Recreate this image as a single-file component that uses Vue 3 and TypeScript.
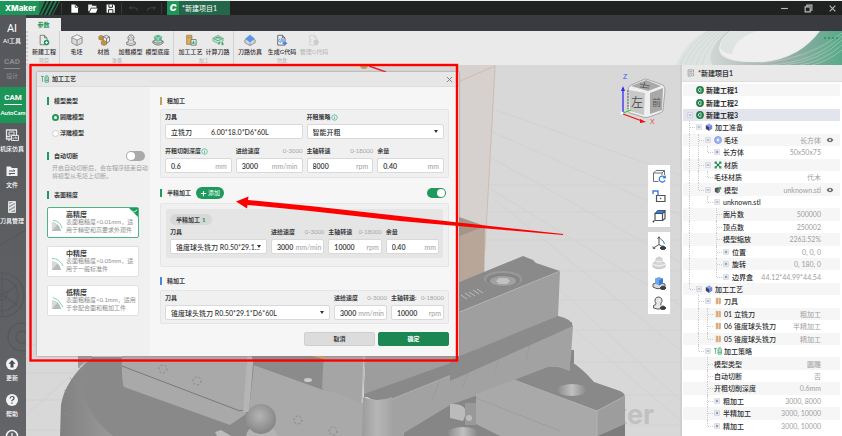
<script setup lang="ts">
import { computed, h, reactive, ref } from 'vue'

interface Layer { d: string; fill?: string; stroke?: string; w?: number }

const G = '#1d9a5c'
const K = '#6d7072'
const B = '#3d7fd6'
const circle = (x: number, y: number, r: number) =>
  `M${x - r} ${y}a${r} ${r} 0 1 0 ${2 * r} 0a${r} ${r} 0 1 0 ${-2 * r} 0z`
const EYE = 'M8 12q3-4 6 0q-3 4-6 0z'

const icons: Record<string, Layer[]> = {
  newProject: [
    { d: 'M2.500 1.500h5l3 3v8h-8zM7.500 1.500v3h3', stroke: K },
    { d: circle(10, 10, 3.2), fill: G },
    { d: 'M10 8.300v3.400M8.300 10h3.400', stroke: '#fff' },
  ],
  blank: [
    { d: 'M7 1l6 3v6.500l-6 3l-6-3V4z', fill: '#d9dadb', stroke: '#88898b' },
    { d: 'M1 4l6 3l6-3M7 7v6.500', stroke: '#88898b' },
    { d: 'M7 1l6 3l-6 3l-6-3z', fill: '#f5f5f5', stroke: '#88898b', w: 0.7 },
  ],
  material: [
    { d: 'M6 3l4-1.500l3.500 2v5L9.500 11L6 9z', fill: '#eee', stroke: K },
    { d: 'M6 3l4 2l3.500-1.500M10 5v6', stroke: K },
    { d: 'M1 3l2.500-1.500L6 3v3L3.500 7.200L1 6zM4 8.500l3-1l3 1.500v3L7 13.500l-3-1.500z', fill: '#c99438', stroke: '#79602b', w: 0.6 },
  ],
  load: [
    { d: 'M7 1a3.700 3.700 0 0 0-2.500 6.300Q5 9 2 9.500v2.800q5 2.400 10 0V9.500q-3-.5-2.500-2.200A3.700 3.700 0 0 0 7 1z', fill: '#e2e3e3', stroke: K },
    { d: 'M2 10q5 2.400 10 0M5.500 4q1.500-1.500 3 0v3q-1.500 1-3 0z', stroke: '#8d8f90', w: 0.7 },
  ],
  base: [
    { d: 'M1 8.500q6-4 12 0v2q-6 5-12 0z', fill: '#d2d4d4', stroke: K },
    { d: 'M1 8.500q6 4.500 12 0', stroke: K },
    { d: 'M2 3l5-2l5 2l-1 4l-4 2l-4-2z', fill: '#55b487' },
    { d: 'M2 3l5 2l5-2M7 5v4M4 2.500l5 5M10 2.500l-5 5', stroke: '#cfeadb', w: 0.6 },
  ],
  craft: [
    { d: 'M2 1.500h6v10.500H2z', fill: '#d9ae63', stroke: '#a67f35' },
    { d: 'M2 3.500q3 1.500 6 0', stroke: '#a67f35', w: 0.7 },
    { d: 'M7 6.500h6v6.500H7z', fill: '#e6f2ec', stroke: K },
    { d: 'M8.500 11.500v-2M10 11.500v-3.500M11.500 11.500v-1.500', stroke: G },
  ],
  path: [
    { d: 'M1 5l6-3.500l6 3.500v3l-6 3l-6-3z', fill: '#bfe0cf', stroke: '#63a584', w: 0.8 },
    { d: 'M1 5l6 3l6-3M3 5q4-3 8 0M5 5q2-1.500 4 0', stroke: '#3e9a6d', w: 0.8 },
    { d: 'M7 8.500h6.500v4.500H7z', fill: '#eaeaea' },
    { d: 'M8 12.500V9.500h2M8 11h1.500M13 9.500h-1.500v1.500h1.500v1.500h-2', stroke: G },
  ],
  simulate: [
    { d: 'M1 7l6-3l6 3v3l-6 3.500L1 10z', fill: '#d4d6d8', stroke: '#85888c' },
    { d: 'M1.500 5.500l5.500-4.500l5.500 4.500l-5.500 4.500z', fill: '#5a94e4', stroke: '#8bb4ef', w: 0.6 },
    { d: 'M7 10v3.500', stroke: '#85888c', w: 0.7 },
  ],
  gcode: [
    { d: 'M2 1.500h5.500l3 3v8.500H2zM7.500 1.500v3h3', stroke: '#5c6064' },
    { d: 'M4.500 5.500l-1.500 2l1.500 2M6.500 5l-1 5', stroke: B },
    { d: circle(8.500, 8, 2.2), fill: '#8bb4ef' },
    { d: 'M7 10.500l3-1.500l3.500 1.500l-3 2.500z', fill: '#4783de' },
  ],
  gcodeOff: [
    { d: 'M2 1.500h5.500l3 3v8.500H2zM7.500 1.500v3h3', stroke: '#cfd0d1' },
    { d: 'M4.500 5.500l-1.500 2l1.500 2', stroke: '#cfd0d1' },
    { d: circle(9.500, 9.500, 3), fill: '#cbcccd' },
  ],
  machine: [
    { d: 'M1.500 2h10v9h-10zM1.500 8.500h4M4 11v2', stroke: '#e3e4e4', w: 1.3 },
    { d: 'M4 4h5v3H4z', stroke: '#e3e4e4', w: 1 },
    { d: 'M6.500 7.500h7v5h-7z', fill: '#5b5d61', stroke: '#e3e4e4', w: 1 },
    { d: 'M8 9v2h1M10 11V9h1v2M12 11V9', stroke: '#e3e4e4', w: 0.7 },
  ],
  folder: [
    { d: 'M1.500 2.500h4l1.500 1.500h5.500v8h-11z', fill: '#f0f0f0' },
    { d: 'M4 7h6l-1.500-1.500M10 9.500H4l1.500 1.500', stroke: '#5b5d61' },
  ],
  tool: [
    { d: 'M3.500 1.500h7v11h-7z', fill: '#a5a6a8', stroke: '#dedfdf' },
    { d: 'M4 5l6-3M4 8.500l6-3.500M4 12l6-3.500', stroke: '#f0f0f0', w: 1.2 },
  ],
  update: [
    { d: circle(7, 7, 6), fill: '#f2f2f2' },
    { d: 'M7 3l3.500 3.700h-2V10.500h-3V6.700h-2z', fill: '#4b4d51' },
  ],
  help: [
    { d: circle(7, 7, 6), fill: '#f2f2f2' },
    { d: 'M5 5.500q.2-2 2-2q2 0 2 1.800q0 1.200-2 2.200v.8M7 9.500v1.200', stroke: '#4b4d51', w: 1.2 },
  ],
  clock: [
    { d: circle(7, 7, 5.5), stroke: '#f2f2f2', w: 1.6 },
    { d: 'M7 4v3.500l3 2', stroke: '#f2f2f2', w: 1.3 },
  ],
  page: [{ d: 'M3 2h5l3.500 3.500V12.500H3z', fill: '#fff' }, { d: 'M8 2v3.500h3.500', stroke: '#333' }],
  open: [{ d: 'M1.500 2h4.500l1 1.500h5V6h-7l-2 4.500H1.500z', fill: '#e8e8e8' }, { d: 'M5.500 7h8l-2 5.500H3z', fill: '#fff' }],
  save: [{ d: 'M2 2h9l1.500 1.500v9H2z', fill: '#fff' }, { d: 'M5 2v3.500h4.500V2M4.500 12.500V8.500h5.500v4', stroke: '#222', w: 1.2 }],
  undo: [{ d: 'M4 4L2 6.200l2.500 2M2 6.200h7q3.500.3 3 4', stroke: '#4a4c4b' }],
  redo: [{ d: 'M10 4l2 2.200l-2.500 2M12 6.200H5Q1.500 6.500 2 10.200', stroke: '#4a4c4b' }],
  doc: [
    { d: 'M2 1.500h9.500v5M7 12.500H2v-11M4 4.500h5.500M4 7h4M4 9.500h2', stroke: '#77797b' },
    { d: circle(10, 10, 2.3), stroke: '#77797b' },
  ],
  brand: [
    { d: circle(7, 7, 6.8), fill: '#1e7d46' },
    { d: 'M9.700 5A3.200 3.200 0 1 0 9.700 9M9.500 7H7', stroke: '#fff', w: 1.4 },
  ],
  cube: [
    { d: 'M7 1l5.500 3v6L7 13.500L1.500 10V4z', fill: '#8ea2ee' },
    { d: 'M1.500 4L7 7v6.500L1.500 10z', fill: '#3d4256' },
    { d: 'M7 7l5.500-3v6L7 13.500z', fill: '#6f86e4' },
  ],
  solid: [
    { d: circle(7, 7, 6), fill: '#b5c1f4', stroke: '#6e84e6', w: 1.4 },
    { d: 'M7 3.500l3 1.700v3.600l-3 1.700l-3-1.700V5.200z', fill: '#f0f3ff', stroke: '#6e84e6' },
  ],
  stuff: [
    { d: 'M2 2l10 10M12 2L2 12', stroke: '#1d7c4b', w: 2 },
    { d: 'M1 1h4v4H1zM9 1h4v4H9zM1 9h4v4H1zM9 9h4v4H9z', fill: '#2f9b63' },
  ],
  model: [
    { d: 'M6 2l4.500 2v6L6 12.500L1.500 10V4z', fill: '#50545a' },
    { d: 'M6 6.500l4.500-2.500v6L6 12.500z', fill: '#7f8a85' },
    { d: circle(10.5, 4, 2.5), fill: '#47a870' },
  ],
  cutter: [
    { d: 'M3 1.500h3.500v11H3zM8 1.500h3v11H8z', fill: '#e2b384' },
    { d: 'M6.500 2v10M11 2v10', stroke: '#b27b43', w: 1 },
  ],
  plan: [
    { d: 'M0 2.500h5M2.500 2.500V12M7 4v8.500h6V4M6.500 3.500h7M8 1.500h4M7.500 7h5M7.500 9.700h5', stroke: G, w: 1.2 },
  ],
  viewReset: [
    { d: 'M1.500 4h8.500v8.500H1.500zM1.500 4L4 1.500h8.500V6M10 4l2.500-2.500', stroke: K },
    { d: 'M6.500 6h8v8h-8z', fill: '#fff' },
    { d: 'M12.800 8.500a3 3 0 1 0 .2 2.700M13.200 6.500v2.300h-2.300', stroke: B, w: 1.3 },
  ],
  unlock: [
    { d: 'M4.500 6.500h8.500v6H4.500zM8.700 8.800v1.500', stroke: '#4f5358', w: 1.2 },
    { d: 'M1 5V2h5v4.500', stroke: B, w: 1.4 },
  ],
  faces: [
    { d: 'M3 4.500h7.500v7H3zM10.500 4.500L13 2v7.500l-2.500 2', stroke: '#4f5358', w: 1.2 },
    { d: 'M3 4.500L5.500 1.500H13l-2.500 3z', fill: B, stroke: '#345', w: 0.8 },
    { d: circle(1.5, 12.5, 0.9), fill: '#333' },
  ],
  axes: [
    { d: 'M7 1v7.500L1.500 12M7 8.500l4 2.500M5.800 2.800L7 .8l1.200 2M1 10.500l.3 2l2-.2', stroke: '#4f5358' },
    { d: 'M8.500 3q3.500 1.500 4 5', stroke: B },
    { d: EYE, fill: '#3e4146', stroke: '#3e4146' },
  ],
  stack: [
    { d: 'M4 5.500V2.500L7 1l3 1.500v3l3 2v3.500q-6 3.500-12 0V7.500z', fill: '#d5d6d7', stroke: '#c3c4c5' },
    { d: 'M1 8.500q6 3 12 0M4 5q3 2 6 0', stroke: '#f5f5f5' },
  ],
  stackBlue: [
    { d: 'M1 8q6-3 12 0v3q-6 3.500-12 0z', fill: '#dcdddd', stroke: '#55595e' },
    { d: 'M3 2.500L7 1l4 1.500V7.500L7 9.500L3 7.500z', fill: '#6ea6ee' },
    { d: 'M7 4.200l4-1.700V7.500L7 9.500z', fill: '#3c7cd3' },
    { d: EYE, fill: '#3e4146', stroke: '#3e4146' },
  ],
  figure: [
    { d: 'M6.500 1a3.500 3.500 0 0 0-2.500 6Q4.500 9 1.500 9.500v2.500q4.500 2 8.500.5M9 9.500Q8.500 8 9 7A3.500 3.500 0 0 0 6.500 1', fill: '#e6e7e7', stroke: '#55595e' },
    { d: EYE, fill: '#3e4146', stroke: '#3e4146' },
  ],
  eye: [
    { d: 'M1 7q6-8 12 0q-6 8-12 0z', fill: '#666' },
    { d: circle(7, 7, 2), fill: '#eee' },
  ],
  minus: [
    { d: 'M1.500 1.500h11v11h-11z', fill: '#f4f6fb', stroke: '#a9adb5' },
    { d: 'M4 7h6', stroke: '#4c5f94', w: 1.6 },
  ],
  plus: [
    { d: 'M1.500 1.500h11v11h-11z', fill: '#f4f6fb', stroke: '#a9adb5' },
    { d: 'M4 7h6M7 4v6', stroke: '#4c5f94', w: 1.6 },
  ],
  info: [
    { d: circle(7, 7, 5.5), stroke: '#35b679', w: 1.4 },
    { d: 'M7 3.700v1.300M7 6.300v4', stroke: '#35b679', w: 1.6 },
  ],
}

const Glyph = (p: { name: string }) =>
  h('svg', { viewBox: '0 0 14 14', 'aria-hidden': 'true' },
    icons[p.name].map(l => h('path', {
      d: l.d, fill: l.fill ?? 'none', stroke: l.stroke ?? 'none', 'stroke-width': l.w ?? 1,
    })))
Glyph.props = ['name']

const ribbon = [
  { label: '项目', kind: 'first', tools: [{ t: '新建工程', i: 'newProject' }] },
  { label: '准备', kind: 'mid', tools: [{ t: '毛坯', i: 'blank' }, { t: '材质', i: 'material' }, { t: '加载模型', i: 'load' }, { t: '模型底座', i: 'base' }] },
  { label: '加工', kind: 'mid', tools: [{ t: '加工工艺', i: 'craft' }, { t: '计算刀路', i: 'path' }] },
  { label: '仿真', kind: 'wide', tools: [{ t: '刀路仿真', i: 'simulate' }, { t: '生成G代码', i: 'gcode' }, { t: '管理G代码', i: 'gcodeOff', off: true }] },
] as { label: string; kind: string; tools: { t: string; i: string; off?: boolean }[] }[]

const modes = [
  { t: 'AI工具', word: 'AI' },
  { t: '设计', word: 'CAD', dim: true },
  { t: 'AutoCam', word: 'CAM', active: true },
  { t: '机床仿真', i: 'machine' },
  { t: '文件', i: 'folder' },
  { t: '刀具管理', i: 'tool' },
] as { t: string; word?: string; i?: string; dim?: boolean; active?: boolean }[]
const services = [{ t: '更新', i: 'update' }, { t: '帮助', i: 'help' }, { t: '', i: 'clock' }]

const precisions = [
  { id: 'high', t: '高精度', lines: ['表面粗糙度<0.01mm，适', '用于精密和高要求外观件'], arc: 'M2 1.500Q10 2 12 10' },
  { id: 'mid', t: '中精度', lines: ['表面粗糙度<0.05mm，适', '用于一般标准件'], arc: 'M1 .5Q9 .5 13 8.500' },
  { id: 'low', t: '低精度', lines: ['表面粗糙度<0.1mm，适用', '于非配合面和粗加工件'], arc: 'M2 .5L7 3L10 6.500L13 11' },
]
const precision = ref('high')
const shape = ref('round')
const form = reactive({
  autoCut: false, semi: true, depth: '0.6',
  roughFeed: '3000', roughSpeed: '8000', roughRest: '0.40',
  semiFeed: '3000', semiSpeed: '10000', semiRest: '0.40',
  fineFeed: '3000', fineSpeed: '10000',
})

interface Row { d: number; t: string; box?: string; i?: string; v?: string; eye?: boolean; on?: boolean; strong?: boolean }
const rows: Row[] = [
  { d: 0, t: '新建工程1', i: 'brand', strong: true },
  { d: 0, t: '新建工程2', i: 'brand', strong: true },
  { d: 0, t: '新建工程3', i: 'brand', box: 'minus', on: true, strong: true },
  { d: 1, t: '加工准备', i: 'cube', box: 'minus' },
  { d: 2, t: '毛坯', i: 'solid', box: 'minus', v: '长方体', eye: true },
  { d: 3, t: '长方体', box: 'plus', v: '50x50x75' },
  { d: 2, t: '材质', i: 'stuff', box: 'minus' },
  { d: 3, t: '毛坯材质', v: '代木' },
  { d: 2, t: '模型', i: 'model', box: 'minus', v: 'unknown.stl', eye: true },
  { d: 3, t: 'unknown.stl', box: 'minus' },
  { d: 4, t: '面片数', v: '500000' },
  { d: 4, t: '顶点数', v: '250002' },
  { d: 4, t: '模型缩放', v: '2263.52%' },
  { d: 4, t: '位置', box: 'plus', v: '0, 0, 0' },
  { d: 4, t: '旋转', box: 'plus', v: '0, 180, 0' },
  { d: 4, t: '边界盒', box: 'plus', v: '44.12*44.99*44.54' },
  { d: 1, t: '加工工艺', i: 'cube', box: 'minus' },
  { d: 2, t: '刀具', i: 'cutter', box: 'minus' },
  { d: 3, t: '01 立铣刀', i: 'cutter', v: '粗加工' },
  { d: 3, t: '06 锥度球头铣刀', i: 'cutter', v: '半精加工' },
  { d: 3, t: '05 锥度球头铣刀', i: 'cutter', v: '精加工' },
  { d: 2, t: '加工策略', i: 'plan', box: 'minus' },
  { d: 3, t: '模型类型', v: '圆雕' },
  { d: 3, t: '自动切断', v: '否' },
  { d: 3, t: '开粗切削深度', v: '0.6mm' },
  { d: 3, t: '粗加工', box: 'plus', v: '3000, 8000' },
  { d: 3, t: '半精加工', box: 'plus', v: '3000, 10000' },
  { d: 3, t: '精加工', box: 'plus', v: '3000, 10000' },
]

// A guide column continues downward while a later sibling exists at its level.
const continues = (index: number, depth: number) => {
  for (let i = index + 1; i < rows.length; i++) {
    if (rows[i].d < depth) return false
    if (rows[i].d === depth) return true
  }
  return false
}
const tree = computed(() => rows.map((row, index) => ({
  ...row,
  guides: Array.from({ length: row.d }, (_, k) => {
    const more = continues(index, k + 1)
    if (k === row.d - 1) return more ? 'tee' : 'elbow'
    return more ? 'line' : 'none'
  }),
})))
</script>

<template>
  <div class="app">
    <header class="titlebar">
      <div class="logo">
        <strong>XMaker</strong>
        <svg viewBox="0 0 22 14" aria-hidden="true"><path d="M0 0h6L0 14zM8 0h2L3 14H1zM12 0h2L7 14H5zM16 0h2l-7 14H9zM20 0h1l-7 14h-1z" fill="#1e7d4c" /></svg>
      </div>
      <div class="quick">
        <button aria-label="新建"><Glyph name="page" /></button>
        <button aria-label="打开"><Glyph name="open" /></button>
        <button aria-label="保存"><Glyph name="save" /></button>
      </div>
      <div class="quick history">
        <button aria-label="撤销"><Glyph name="undo" /></button>
        <button aria-label="重做"><Glyph name="redo" /></button>
      </div>
      <div class="doc-tab"><b>C</b><span>*新建项目1</span></div>
      <div class="window-buttons">
        <button aria-label="最小化"><svg viewBox="0 0 8 8"><path d="M1 4h6" /></svg></button>
        <button aria-label="还原"><svg viewBox="0 0 8 8"><path d="M1 2.500h4.500V7H1zM2.500 2.500V1H7v4.500H5.500" /></svg></button>
        <button aria-label="关闭"><svg viewBox="0 0 8 8"><path d="M1.500 1.500l5 5M6.500 1.500l-5 5" /></svg></button>
      </div>
    </header>

    <div class="body">
      <nav class="modes">
        <svg class="gear-art" viewBox="0 0 26 150" preserveAspectRatio="xMidYMid slice" aria-hidden="true">
          <g fill="none" stroke="#57595e" stroke-width="1.500">
            <circle cx="2" cy="70" r="22" /><circle cx="2" cy="70" r="16" /><circle cx="2" cy="70" r="5" />
            <circle cx="22" cy="112" r="14" /><circle cx="22" cy="112" r="6" /><path d="M2 48v44M-14 60l32 20M-14 80l32-20M0 20L26 5" />
          </g>
        </svg>
        <button v-for="m in modes" :key="m.t" class="mode" :class="{ active: m.active, dim: m.dim }">
          <span v-if="m.word" class="word" :class="{ ai: m.word === 'AI' }">{{ m.word }}</span>
          <Glyph v-else :name="m.i!" class="mode-icon" />
          <span>{{ m.t }}</span>
        </button>
        <div class="services">
          <button v-for="s in services" :key="s.i" class="mode" :aria-label="s.t || '历史'">
            <Glyph :name="s.i" class="mode-icon" />
            <span>{{ s.t }}</span>
          </button>
        </div>
      </nav>

      <div class="main">
        <div class="tabs"><button class="tab">参数</button></div>
        <div class="ribbon">
          <section v-for="g in ribbon" :key="g.label" class="group" :class="g.kind">
            <div class="tools">
              <button v-for="t in g.tools" :key="t.t" :disabled="t.off">
                <Glyph :name="t.i" class="tool-icon" />
                <span>{{ t.t }}</span>
              </button>
            </div>
            <small>{{ g.label }}</small>
          </section>
          <svg class="swoosh" viewBox="675 31 167 34" aria-hidden="true">
            <defs>
              <linearGradient id="sw" x1="0" x2="1"><stop offset="0" stop-color="#cfd8d5" /><stop offset=".5" stop-color="#a3b0ac" /><stop offset="1" stop-color="#5aa98a" /></linearGradient>
            </defs>
            <path d="M676 65Q688 40 706 31h22Q712 45 711 65z" fill="#dde3e1" />
            <path d="M728 31Q705 50 712 65h130V31h-22Q800 58 765 62Q718 64 719 48Q721 38 730 31z" fill="url(#sw)" />
            <path d="M730 31Q716 42 721 52Q730 64 765 61Q798 57 819 31h-62Q735 38 732 52" fill="#efefef" />
            <path d="M757 31Q735 38 732 54Q724 54 720 48Q721 38 730 31z" fill="#dfe4e2" />
            <g fill="none" stroke="#bcd8cc" stroke-width=".5">
              <path d="M842 36Q815 62 770 65M842 40Q820 61 785 65M842 45Q822 62 800 65M842 50Q826 62 812 65M842 33Q808 60 760 63" />
              <path d="M680 65Q690 42 710 31M685 65Q694 43 714 31M690 65Q698 44 718 31M696 65Q702 45 722 31M702 65Q706 46 725 31" stroke="#c5d0cc" />
            </g>
            <path d="M824 38h2M828 38h2M832 38h2M836 38h2" stroke="#289f67" stroke-width="2" />
          </svg>
        </div>

        <div class="work">
          <main class="viewport">
            <svg class="scene" viewBox="26 65 654 371" preserveAspectRatio="xMidYMid slice" aria-hidden="true">
              <defs>
                <linearGradient id="cyl" x1="0" x2="1"><stop offset="0" stop-color="#808080" /><stop offset=".4" stop-color="#a2a2a2" /><stop offset="1" stop-color="#969696" /></linearGradient>
                <linearGradient id="pil" x1="0" x2="1"><stop offset="0" stop-color="#9c9c9c" /><stop offset=".5" stop-color="#b6b6b6" /><stop offset="1" stop-color="#a4a4a4" /></linearGradient>
                <radialGradient id="ball" cx=".45" cy=".4" r=".6"><stop offset="0" stop-color="#b4b4b4" /><stop offset="1" stop-color="#858585" /></radialGradient>
                <linearGradient id="bore" x1="0" x2="1"><stop offset="0" stop-color="#8b8b8b" /><stop offset=".5" stop-color="#c0c0c0" /><stop offset="1" stop-color="#868686" /></linearGradient>
              </defs>
              <rect x="26" y="65" width="654" height="371" fill="#d8d8d8" />
              <g stroke="#cfcfcf" stroke-width=".8" fill="none">
                <path d="M490 108L680 175M488 130L680 215M486 155L680 262M484 185L680 305M495 200L680 350M560 290L680 400M575 330L680 420" />
                <path d="M490 185H680M488 212H680M488 240H680M560 271H680M560 300H680M560 330H680M575 362H680M590 395H680M620 425H680" stroke="#d2d2d2" />
                <path d="M26 345H66M26 373H72M26 400H61M26 430H60M26 415L92 357" />
              </g>
              <text x="571" y="424" class="watermark">Maker</text>
              <path d="M150 65H496L485 250L484 282H450V65z" fill="#d6d1ce" />
              <path d="M460 81L495 66L485 250" fill="none" stroke="#cbb8ab" stroke-width=".8" />
              <path d="M450 214L485 227L484 290H450z" fill="#b8a698" />
              <path d="M450 214L485 226L450 240z" fill="#a29688" />
              <circle cx="364" cy="65" r="4" fill="#c19a5c" />
              <path d="M369 66L386 72" stroke="#e5262d" stroke-width="1.500" />

              <path d="M60 436L61 405Q65 380 92 357H240V436z" fill="url(#cyl)" />
              <path d="M64 390L83 404M70 378L84 390M79 367L92 376M62 412L88 425" stroke="#8c8c8c" stroke-width=".7" />
              <path d="M92 357Q82 368 82 382Q85 414 113 436H330V357z" fill="#898989" />
              <path d="M122 350H247L246 414L230 425L124 387Q121 380 122 350z" fill="#a9a9a9" />
              <path d="M78 350V368L92 357V350z" fill="#999" />
              <path d="M122 366L240 411L246 409" fill="none" stroke="#747474" stroke-width=".9" />
              <path d="M247 357L243 412L249 412L253 364L258 350H247z" fill="#b5b5b5" />
              <path d="M254 365L322 389L400 415V436H275L248 420z" fill="#a9a9a9" />
              <path d="M250 350H326L323 390L254 365z" fill="#8b8b8b" />
              <path d="M324 350H366L362 403L322 389z" fill="#a5a5a5" />
              <path d="M364 355L362 403" stroke="#c6c6c6" stroke-width="1" />
              <path d="M311 356h13v3z" fill="#d89f66" />
              <ellipse cx="308" cy="380" rx="4" ry="2" fill="#c9c9c9" />
              <g fill="none" stroke="#858585" stroke-width="1" stroke-dasharray="2 2"><circle cx="163" cy="369" r="4" /><circle cx="197" cy="381" r="4" /><circle cx="298" cy="420" r="4" /><circle cx="333" cy="431" r="4" /></g>
              <path d="M246 436Q249 424 261 424T278 436z" fill="#b3b3b3" />
              <circle cx="261" cy="419" r="15" fill="url(#ball)" />
              <path d="M215 432l6-2l10 6h-14z" fill="#bbb" />

              <path d="M364 397L366 350H574V400L480 436H405V398z" fill="#878787" />
              <path d="M366 345H470V366L392 397Q375 405 364 394z" fill="#9d9d9d" />
              <path d="M364 394L470 356L572 322V330L392 399Q375 405 364 394z" fill="#898989" />
              <path d="M392 399L573 326L570 371L420 427L410 436H392z" fill="#a2a2a2" />
              <path d="M363 397Q377 403 392 397V436H362z" fill="url(#pil)" />
              <path d="M440 379l-8 22M470 367l-8 22M500 355l-6 20M530 343l-4 18" stroke="#989898" stroke-width=".7" />
              <path d="M392 399L573 326" stroke="#b4b4b4" stroke-width=".8" />
              <path d="M404 433L450 405L514 382L525 436H404z" fill="#868686" />
              <path d="M450 404Q472 403 463 421L450 418z" fill="#bbb" />
              <path d="M465 403h11v22h-11z" fill="#999" /><circle cx="469" cy="418" r="3" fill="#bcbcbc" />
              <path d="M476 394L514 380L597 411V436H500L476 424z" fill="#a9a9a9" />
              <path d="M476 398L560 431" stroke="#9c9c9c" stroke-width=".8" />
              <path d="M514 380L548 367H558L570 371V361Q582 368 594 382L620 391Q625 393 625 397L597 411z" fill="#898989" />
              <path d="M597 411L625 396V436H597z" fill="#9d9d9d" /><path d="M598 436L625 424V436z" fill="#7c7c7c" />
              <path d="M514 380L597 411L625 396M597 411V436" fill="none" stroke="#b6b6b6" stroke-width=".8" />
              <ellipse cx="572" cy="390" rx="15" ry="6" fill="url(#bore)" />
              <ellipse cx="463" cy="433" rx="15" ry="6" fill="url(#bore)" />

              <path d="M450 286L523 256L533 260L536 263L560 271L459 312H450z" fill="#8a8a8a" />
              <path d="M450 316L560 271L558 317L450 360z" fill="#9f9f9f" />
              <path d="M450 316L560 271" stroke="#b0b0b0" stroke-width=".8" />
              <path d="M450 360L558 316Q570 318 573 326L450 381z" fill="#8b8b8b" />
              <ellipse cx="503" cy="279" rx="19" ry="8" fill="#999" /><ellipse cx="503" cy="280" rx="17" ry="7" fill="#858585" />
              <ellipse cx="503" cy="281" rx="13" ry="5" fill="#a1a1a1" /><path d="M496 281l3-3h8l3 3l-3 3h-8z" fill="#c2c2c2" />
              <path d="M461 295l6 4M465 293l6 4M469 292l6 4M473 290l6 4M477 289l6 4" stroke="#bcbcbc" stroke-width="1" />
            </svg>

            <svg class="orient" viewBox="618 72 52 56" aria-hidden="true">
              <path d="M628 90Q628 87 631 85L645 79Q647 79 649 80L663 85Q665 87 665 90L663 110Q663 112 660 113L649 117Q646 118 643 117L630 113Q628 112 628 109z" fill="#efefef" stroke="#999" stroke-width=".8" />
              <path d="M631 86L646 80L661 86L648 91z" fill="#a9a9a9" /><path d="M629 90L645 93L644 115L630 111z" fill="#c8c8c8" /><path d="M650 93L663 88L662 110L650 114z" fill="#a8a8a8" />
              <path d="M628 90V109" stroke="#555" stroke-width=".8" stroke-dasharray="2 1" />
              <text x="631" y="107" class="face">左</text><text x="652" y="106" class="face side">前</text><path d="M640 84l10 2M645 82l-2 6M640 87l9 1" stroke="#555" stroke-width=".8" />
              <path d="M623 113V88" stroke="#332ef2" stroke-width="1.300" /><path d="M621 91l2-5l2 5z" fill="#332ef2" />
              <path d="M623 113l8-3" stroke="#2bd52b" stroke-width="1.300" />
              <path d="M623 114l19 7" stroke="#f20d0d" stroke-width="1.300" /><path d="M640 119l6 3l-6 1z" fill="#f20d0d" /><circle cx="622" cy="113" r="1.500" fill="#fff" />
              <text x="623" y="79" class="axis z">Z</text><text x="650" y="124" class="axis x">X</text>
            </svg>

            <div class="view-tools">
              <div><button v-for="n in ['viewReset', 'unlock', 'faces']" :key="n" :aria-label="n"><Glyph :name="n" /></button></div>
              <div><button v-for="n in ['axes', 'stack', 'stackBlue', 'figure']" :key="n" :aria-label="n"><Glyph :name="n" /></button></div>
            </div>

            <form class="dialog" @submit.prevent>
              <header><Glyph name="plan" class="small-icon" /><h2>加工工艺</h2>
                <button class="close" type="button" aria-label="关闭"><svg viewBox="0 0 8 8"><path d="M1 1l6 6M7 1L1 7" stroke="#777" /></svg></button>
              </header>
              <div class="columns">
                <div class="left">
                  <h3>模型类型</h3>
                  <div class="radios">
                    <label><input v-model="shape" type="radio" value="round">圆雕模型</label>
                    <label><input v-model="shape" type="radio" value="relief">浮雕模型</label>
                  </div>
                  <div class="title-row">
                    <h3><label for="auto-cut">自动切断</label></h3>
                    <input id="auto-cut" v-model="form.autoCut" class="switch" type="checkbox">
                  </div>
                  <p class="hint">开启自动切断后，会在程序结束自动<br>将模型从毛坯上切断。</p>
                  <h3>表面精度</h3>
                  <div class="cards">
                    <label v-for="p in precisions" :key="p.id" class="card" :class="{ picked: p.id === precision }">
                      <input v-model="precision" type="radio" name="precision" :value="p.id">
                      <svg viewBox="0 0 14 14" class="card-icon" aria-hidden="true">
                        <path d="M1 3.500Q9 4 11 13H1z" fill="#b9babb" /><path d="M1 3.500Q5 4 7 6L1 13z" fill="#d8d9d9" />
                        <path :d="p.arc" fill="none" stroke="#74cfa4" stroke-width="1" />
                      </svg>
                      <span class="card-text"><b>{{ p.t }}</b><span v-for="l in p.lines" :key="l">{{ l }}</span></span>
                      <svg v-if="p.id === precision" class="corner" viewBox="0 0 10 10" aria-hidden="true"><path d="M0 0h10v10z" fill="#1d9a5c" /><path d="M4.500 3l1.500 1.500L9 2" fill="none" stroke="#fff" /></svg>
                    </label>
                  </div>
                </div>

                <div class="right">
                  <h3 class="gold">粗加工</h3>
                  <div class="box quad">
                    <div class="field span2">
                      <span class="cap"><b>刀具</b></span>
                      <button class="control tool-pick" type="button"><span>立铣刀</span><span>6.00*18.0*D6*60L</span></button>
                    </div>
                    <div class="field span2">
                      <span class="cap"><label for="strategy">开粗策略</label><Glyph name="info" class="info" /></span>
                      <span class="control pick"><select id="strategy"><option>智能开粗</option></select></span>
                    </div>
                    <div class="field"><span class="cap"><label for="depth">开粗切削深度</label><Glyph name="info" class="info" /></span>
                      <span class="control"><input id="depth" v-model="form.depth"><i>mm</i></span></div>
                    <div class="field"><span class="cap"><label for="rf">进给速度</label><em>0-3000</em></span>
                      <span class="control"><input id="rf" v-model="form.roughFeed"><i>mm/min</i></span></div>
                    <div class="field"><span class="cap"><label for="rs">主轴转速</label><em>0-18000</em></span>
                      <span class="control"><input id="rs" v-model="form.roughSpeed"><i>rpm</i></span></div>
                    <div class="field"><span class="cap"><label for="rr">余量</label></span>
                      <span class="control"><input id="rr" v-model="form.roughRest"><i>mm</i></span></div>
                  </div>

                  <div class="title-row semi-title">
                    <h3><label for="semi">半精加工</label></h3>
                    <button class="add" type="button"><svg viewBox="0 0 8 8" aria-hidden="true"><path d="M4 1v6M1 4h6" stroke="#fff" stroke-width="1.200" /></svg>添加</button>
                    <input id="semi" v-model="form.semi" class="switch" type="checkbox">
                  </div>
                  <div class="box semi">
                    <div class="inner">
                      <span class="pill">半精加工 <b>1</b></span>
                      <div class="semi-grid">
                        <div class="field"><span class="cap"><label for="st">刀具</label></span>
                          <span class="control pick"><select id="st"><option>锥度球头铣刀 R0.50*29.1...</option></select></span></div>
                        <div class="field"><span class="cap"><label for="sf">进给速度</label><em>0-3000</em></span>
                          <span class="control"><input id="sf" v-model="form.semiFeed"><i>mm/min</i></span></div>
                        <div class="field"><span class="cap"><label for="ss">主轴转速</label><em>0-18000</em></span>
                          <span class="control"><input id="ss" v-model="form.semiSpeed"><i>rpm</i></span></div>
                        <div class="field"><span class="cap"><label for="sr">余量</label></span>
                          <span class="control"><input id="sr" v-model="form.semiRest"><i>mm</i></span></div>
                      </div>
                    </div>
                  </div>

                  <h3 class="blue">精加工</h3>
                  <div class="box fine">
                    <div class="field"><span class="cap"><label for="ft">刀具</label></span>
                      <span class="control pick"><select id="ft"><option>锥度球头铣刀 R0.50*29.1*D6*60L</option></select></span></div>
                    <div class="field"><span class="cap"><label for="ff">进给速度</label><em>0-3000</em></span>
                      <span class="control"><input id="ff" v-model="form.fineFeed"><i>mm/min</i></span></div>
                    <div class="field"><span class="cap"><label for="fs">主轴转速:</label><em>0-18000</em></span>
                      <span class="control"><input id="fs" v-model="form.fineSpeed"><i>rpm</i></span></div>
                  </div>
                  <footer><button type="button">取消</button><button type="submit" class="primary">确定</button></footer>
                </div>
              </div>
            </form>

            <svg class="notes" viewBox="26 62 654 374" aria-hidden="true">
              <rect x="30.500" y="65" width="426.500" height="295.500" fill="none" stroke="#f00" stroke-width="2.400" />
              <path d="M236 201.500L248.500 196.500L248 200L310 206L563 234L563 235L400 221L310 211L247.500 205L247 208.500z" fill="#f00" />
            </svg>
          </main>

          <aside class="project">
            <header><Glyph name="doc" class="small-icon" /><h2>*新建项目1</h2></header>
            <ul>
              <li v-for="(r, n) in tree" :key="n" :class="{ on: r.on, strong: r.strong }">
                <span v-for="(g, k) in r.guides" :key="k" class="guide" :class="g" />
                <span v-if="r.box || r.d === 0" class="toggle"><Glyph v-if="r.box" :name="r.box" /></span>
                <span v-if="r.i" class="kind"><Glyph :name="r.i" /></span>
                <span class="name">{{ r.t }}</span>
                <span class="value">{{ r.v }}</span>
                <span class="eye"><Glyph v-if="r.eye" name="eye" /></span>
              </li>
            </ul>
          </aside>
        </div>
      </div>
    </div>
  </div>
</template>

<style>
body { margin: 0; }
</style>

<style scoped>
* { box-sizing: border-box; }
.app { display: flex; flex-direction: column; height: 100vh; overflow: hidden; font: 6px/8px Lato, "Noto Sans CJK SC", sans-serif; color: #3a3c3e; background: #d8d8d8; }
button, input, select { font: inherit; color: inherit; border: 0; padding: 0; margin: 0; background: none; min-width: 0; }
h2, h3, p, ul { margin: 0; padding: 0; }
svg { display: block; flex: none; }

.titlebar { display: flex; align-items: center; height: 15px; flex: none; background: #202221; border-top: 1px solid #eee; }
.logo { display: flex; align-items: center; align-self: stretch; width: 61px; color: #fff; }
.logo strong { display: flex; align-items: center; height: 100%; width: 39px; padding-left: 5px; background: #1d9458; font: 800 8px/14px Inter, sans-serif; }
.logo svg { width: 22px; height: 14px; }
.quick { display: flex; align-items: center; gap: 7px; padding: 0 5px 0 7px; border-left: 1px solid #383a39; }
.quick svg { width: 11px; height: 11px; }
.history { padding: 0 4px 0 6px; border-right: 1px solid #383a39; }
.doc-tab { display: flex; align-items: center; align-self: stretch; width: 63px; margin-left: 5px; background: #24664a; color: #fff; font-size: 7px; }
.doc-tab b { width: 12px; margin-right: 3px; background: #1e9458; font: italic 900 9px/14px Inter, sans-serif; text-align: center; }
.window-buttons { display: flex; gap: 15px; margin-left: auto; padding-right: 5px; }
.window-buttons svg { width: 9px; height: 9px; fill: none; stroke: #bbb; }

.body { display: flex; flex: 1; min-height: 0; }
.modes { position: relative; display: flex; flex-direction: column; width: 26px; flex: none; background: linear-gradient(#55575b, #626468); overflow: hidden; }
.gear-art { position: absolute; left: 0; top: 210px; width: 26px; height: 150px; }
.mode { position: relative; display: flex; flex-direction: column; align-items: center; height: 36px; flex: none; padding: 5px 2px 0 0; color: #fff; white-space: nowrap; font-weight: 500; }
.mode > span:last-child { margin-top: 3px; }
.mode-icon { width: 14px; height: 14px; }
.word { height: 14px; font: 700 8px/12px Roboto, sans-serif; }
.word.ai { font-size: 11px; font-weight: 400; line-height: 18px; }
.mode.dim { color: #8b8d90; }
.mode.dim .word, .mode.active .word { height: 13px; border-bottom: 1px solid currentColor; }
.mode.active { padding-right: 0; background: #1d9458; font-size: 7px; font-weight: 400; }
.mode.active > span:last-child { margin-top: 4px; font-size: 6px; font-weight: 700; }
.services { height: 84px; margin-top: auto; overflow: hidden; display: flex; flex-direction: column; }

.main { display: flex; flex-direction: column; flex: 1; min-width: 0; }
.tabs { height: 16px; flex: none; padding-top: 3px; background: #3a3b40; }
.tab { width: 35px; height: 13px; background: #ececec; color: #1d9458; font-weight: 700; }
.ribbon { position: relative; display: flex; height: 34px; flex: none; background: #eaeaea; }
.group { position: relative; display: flex; flex-direction: column; align-items: center; border-right: 1px solid #d2d2d2; }
.group small { font-size: 5px; line-height: 7px; color: #aaa; }
.tools { display: flex; }
.tools button { display: flex; flex-direction: column; align-items: center; gap: 2px; width: 27px; height: 26px; padding-top: 3px; white-space: nowrap; color: #333; font-weight: 500; }
.tools button:disabled { color: #bcbcbc; }
.tool-icon { width: 12px; height: 12px; }
.first { width: 34px; padding-left: 1px; border-left: 2px dotted #ccc; }
.mid { padding: 0 2px 0 3px; }
.wide { border-right: 0; }
.wide button { width: 32px; }
.swoosh { position: absolute; right: 0; top: 0; width: 167px; height: 34px; }

.work { display: flex; flex: 1; min-height: 0; }
.viewport { position: relative; flex: 1; min-width: 0; }
.scene { position: absolute; inset: 0; width: 100%; height: 100%; }
.watermark { font: 700 27px Inter, sans-serif; fill: #c0c0c0; }
.orient { position: absolute; right: 10px; top: 7px; width: 52px; height: 56px; }
.face { font: 12px "Noto Sans CJK SC", sans-serif; fill: #555; }
.side { font-size: 9px; }
.axis { font: 7px "Liberation Sans", sans-serif; }
.z { fill: #4b48ee; }
.x { fill: #ef4040; }
.view-tools { position: absolute; right: 10px; top: 100px; display: flex; flex-direction: column; gap: 5px; }
.view-tools div { display: flex; flex-direction: column; gap: 6px; width: 22px; padding: 4px; background: #fff; }
.view-tools svg { width: 14px; height: 14px; }
.notes { position: absolute; left: 0; top: -3px; width: 654px; height: 374px; pointer-events: none; }

.dialog { position: absolute; left: 11px; top: 7px; width: 422px; background: #f6f6f6; box-shadow: 0 0 2px #888; }
.dialog > header { display: flex; align-items: center; height: 15px; padding: 0 6px 0 4px; gap: 3px; background: #e7e7e7; border-bottom: 1px solid #ddd; }
.small-icon { width: 8px; height: 8px; }
h2 { font-size: 6px; line-height: 8px; font-weight: 700; }
.close { margin-left: auto; }
.close svg { width: 7px; height: 7px; }
.columns { display: flex; }
.left { width: 113px; flex: none; padding: 10px 4px 36px 10px; background: #f0f0f0; }
.right { flex: 1; min-width: 0; padding: 10px; }
h3 { height: 8px; padding-left: 5px; border-left: 2px solid #1f9a5d; font-size: 6px; line-height: 8px; font-weight: 700; }
.gold { border-color: #c2a263; }
.blue { border-color: #4d86dd; }
.radios { display: flex; flex-direction: column; gap: 8px; padding: 8px 0 15px 5px; }
.radios label { display: flex; align-items: center; gap: 1px; height: 8px; font-weight: 700; }
.radios input { appearance: none; width: 7px; height: 7px; border-radius: 50%; border: 1px solid #ccc; background: #fff; }
.radios input:checked { border: 2px solid #1d9a5c; }
.title-row { display: flex; align-items: center; height: 8px; }
.switch { appearance: none; display: flex; align-items: center; width: 19px; height: 10px; padding: 1px; margin-left: auto; border-radius: 5px; background: #aaa; }
.switch::before { content: ""; width: 8px; height: 8px; border-radius: 50%; background: #fff; }
.switch:checked { justify-content: flex-end; background: #1d9a5c; }
.left .switch { margin-right: 1px; }
.hint { padding: 4px 0 11px 5px; color: #a3a3a3; white-space: nowrap; }
.cards { display: flex; flex-direction: column; gap: 8px; padding: 8px 7px 0 0; }
.card { position: relative; display: flex; align-items: center; gap: 2px; height: 31px; padding-left: 3px; background: #fff; border: 1px solid #e0e0e0; border-radius: 2px; white-space: nowrap; }
.card.picked { border-color: #4db584; }
.card input { position: absolute; opacity: 0; }
.card-icon { width: 13px; height: 13px; margin-top: 5px; }
.card-text { display: flex; flex-direction: column; color: #8f8f8f; }
.card-text b { font-size: 7px; line-height: 7px; color: #3a3c3e; font-weight: 700; }
.corner { position: absolute; right: 0; top: 0; width: 9px; height: 9px; }

.box { margin-top: 4px; padding: 4px; background: #f0f0f0; border: 1px solid #e5e5e5; border-radius: 2px; }
.quad { display: grid; grid-template-columns: repeat(4, minmax(0, 1fr)); gap: 8px 4px; margin-bottom: 11px; padding-top: 3px; }
.span2 { grid-column: span 2; }
.field { display: flex; flex-direction: column; gap: 3px; min-width: 0; }
.cap { display: flex; align-items: center; height: 8px; white-space: nowrap; font-weight: 700; }
.cap em { margin-left: auto; font-style: normal; font-weight: 400; color: #a5a5a5; }
.info { width: 7px; height: 7px; }
.control { position: relative; display: flex; align-items: center; height: 15px; padding: 0 4px 0 5px; background: #fff; border: 1px solid #d9d9d9; border-radius: 2px; font-size: 7px; font-weight: 500; color: #333; }
.control input { flex: 1; width: 0; outline: 0; font-weight: 600; }
.control i { font-style: normal; font-weight: 400; color: #a0a0a0; }
.pick select { flex: 1; appearance: none; }
.pick::after { content: ""; position: absolute; right: 5px; top: 5px; border: 2px solid transparent; border-top: 3px solid #333; border-bottom: 0; }
.tool-pick span:first-child { width: 40px; text-align: left; }
.add { display: flex; align-items: center; justify-content: center; gap: 1px; width: 28px; height: 12px; margin-left: 5px; border-radius: 6px; background: #1d9a5c; color: #fff; }
.add svg { width: 7px; height: 7px; }
.semi-title .switch { margin-right: 3px; }
.semi { margin-top: 6px; margin-bottom: 10px; padding: 5px 5px 8px; }
.inner { padding: 5px 4px 4px; background: #e5e5e5; border-radius: 2px; }
.pill { display: inline-flex; align-items: center; gap: 2px; height: 11px; padding: 0 6px; margin-bottom: 3px; border-radius: 6px; background: #d8d8d8; font-weight: 700; }
.pill b { color: #1d9a5c; }
.semi-grid { display: grid; grid-template-columns: 97px repeat(3, minmax(0, 1fr)); gap: 4px; }
.semi-grid .control, .fine .control { padding-right: 2px; }
.fine { display: grid; grid-template-columns: minmax(0, 1fr) 53px 53px; gap: 4px; padding: 3px 4px; margin-top: 5px; }
footer { display: flex; justify-content: flex-end; gap: 3px; margin-top: 8px; }
footer button { width: 71px; height: 14px; border-radius: 2px; background: #dcdcdc; border: 1px solid #d0d0d0; font-weight: 700; }
footer .primary { background: #1c8753; border-color: #1c8753; color: #fff; }

.project { display: flex; flex-direction: column; width: 162px; flex: none; padding-bottom: 4px; background: #fff; border-left: 2px solid #cfcfcf; }
.project header { display: flex; align-items: center; gap: 3px; height: 17px; flex: none; padding-left: 5px; background: #e9e9e9; border-bottom: 1px solid #ddd; }
.project h2 { font-size: 7px; }
.project ul { display: grid; grid-auto-rows: minmax(0, 1fr); flex: 1; min-height: 0; padding: 2px 2px 0 1px; list-style: none; }
.project li { display: flex; align-items: center; padding-left: 4px; font-size: 7px; font-weight: 500; color: #2c2e30; white-space: nowrap; overflow: hidden; }
.project li:nth-child(odd) { background: #f6f6f6; }
.project li.on { background: #e2e5ee; }
.project li.strong { font-weight: 700; }
.guide { position: relative; align-self: stretch; width: 9px; flex: none; }
.line::before, .tee::before, .elbow::before { content: ""; position: absolute; left: 2px; top: 0; bottom: 0; border-left: 1px dotted #ccc; }
.elbow::before { bottom: 50%; }
.tee::after, .elbow::after { content: ""; position: absolute; left: 3px; top: 50%; width: 5px; border-top: 1px dotted #ccc; }
.toggle { width: 9px; flex: none; }
.toggle svg { width: 6px; height: 6px; }
.kind { width: 10px; flex: none; }
.kind svg { width: 8px; height: 8px; }
.value { margin-left: auto; font-weight: 400; color: #a0a0a0; }
.eye { width: 19px; flex: none; padding-left: 5px; }
.eye svg { width: 8px; height: 8px; }
</style>
